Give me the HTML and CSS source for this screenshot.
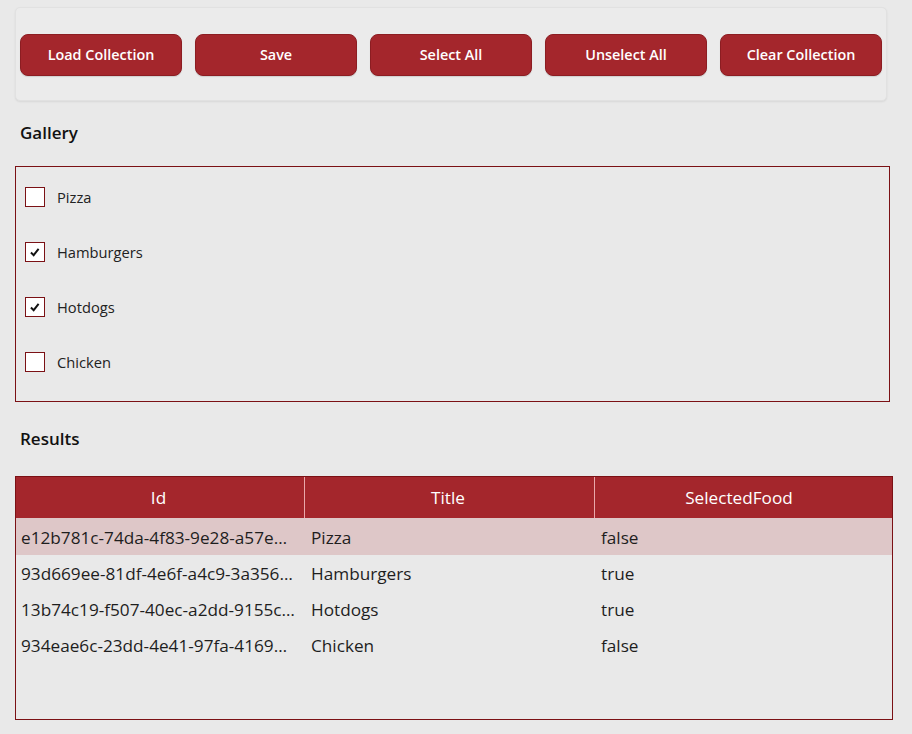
FILE: index.html
```html
<!DOCTYPE html>
<html>
<head>
<meta charset="utf-8">
<link rel="stylesheet" href="styles.css">
</head>
<body>
<div class="page">
  <div class="toolbar">
    <button class="btn">Load Collection</button>
    <button class="btn">Save</button>
    <button class="btn">Select All</button>
    <button class="btn">Unselect All</button>
    <button class="btn">Clear Collection</button>
  </div>

  <div class="label gallery-label">Gallery</div>
  <div class="gallery">
    <div class="item"><span class="box"></span><span class="item-text">Pizza</span></div>
    <div class="item"><span class="box checked"><svg viewBox="0 0 20 20" width="18" height="18"><path d="M5.5 10.5 L8.5 13.5 L14 6.5" fill="none" stroke="#111" stroke-width="2.2"/></svg></span><span class="item-text">Hamburgers</span></div>
    <div class="item"><span class="box checked"><svg viewBox="0 0 20 20" width="18" height="18"><path d="M5.5 10.5 L8.5 13.5 L14 6.5" fill="none" stroke="#111" stroke-width="2.2"/></svg></span><span class="item-text">Hotdogs</span></div>
    <div class="item"><span class="box"></span><span class="item-text">Chicken</span></div>
  </div>

  <div class="label results-label">Results</div>
  <div class="table">
    <div class="thead">
      <div class="th">Id</div>
      <div class="th">Title</div>
      <div class="th th-last">SelectedFood</div>
    </div>
    <div class="row selected">
      <div class="td">e12b781c-74da-4f83-9e28-a57e…</div>
      <div class="td td-mid">Pizza</div>
      <div class="td td-mid">false</div>
    </div>
    <div class="row">
      <div class="td">93d669ee-81df-4e6f-a4c9-3a356…</div>
      <div class="td td-mid">Hamburgers</div>
      <div class="td td-mid">true</div>
    </div>
    <div class="row">
      <div class="td">13b74c19-f507-40ec-a2dd-9155c…</div>
      <div class="td td-mid">Hotdogs</div>
      <div class="td td-mid">true</div>
    </div>
    <div class="row">
      <div class="td">934eae6c-23dd-4e41-97fa-4169…</div>
      <div class="td td-mid">Chicken</div>
      <div class="td td-mid">false</div>
    </div>
  </div>
</div>
</body>
</html>
```

FILE: styles.css
```css
html, body {
  margin: 0;
  padding: 0;
  background: #e9e9e9;
  font-family: "Open Sans", "Noto Sans", sans-serif;
  color: #1e1e1e;
}

.page {
  padding: 7px 20px 0 15px;
}

.toolbar {
  width: 872px;
  height: 94px;
  box-sizing: border-box;
  border: 1px solid #e1e1e1;
  border-radius: 5px;
  background: #ebebeb;
  box-shadow: 0 1px 2px rgba(0,0,0,0.08);
  display: flex;
  align-items: center;
  gap: 13px;
  padding: 1px 0 0 4px;
}

.btn {
  width: 162px;
  height: 42px;
  border: 1px solid #8c1d22;
  border-radius: 8px;
  background: #a4262c;
  color: #fff;
  font-family: "Open Sans", "Noto Sans", sans-serif;
  font-size: 14.4px;
  font-weight: 600;
  padding: 0;
  box-shadow: 0 1px 1px rgba(0,0,0,0.12);
}

.label {
  font-size: 17px;
  font-weight: 600;
  color: #111;
  padding-left: 5px;
  line-height: 22px;
}

.gallery-label {
  margin-top: 21px;
}

.gallery {
  margin-top: 22px;
  width: 875px;
  height: 236px;
  box-sizing: border-box;
  border: 1px solid #7b1115;
  padding-top: 20px;
  display: flex;
  flex-direction: column;
  gap: 35px;
}

.item {
  display: flex;
  align-items: center;
  height: 20px;
  padding-left: 9px;
}

.box {
  width: 20px;
  height: 20px;
  box-sizing: border-box;
  border: 1px solid #7b1115;
  background: #fff;
  display: flex;
  align-items: center;
  justify-content: center;
}

.item-text {
  margin-left: 12px;
  font-size: 14.7px;
  color: #222;
}

.results-label {
  margin-top: 26px;
}

.table {
  margin-top: 26px;
  width: 878px;
  height: 244px;
  box-sizing: border-box;
  border: 1px solid #7b1115;
}

.thead {
  display: grid;
  grid-template-columns: 289px 290px 1fr;
  height: 41px;
  background: #a4262c;
}

.th {
  color: #fff;
  font-size: 17.2px;
  display: flex;
  align-items: center;
  justify-content: center;
  border-right: 1px solid #e9a8ab;
  padding-right: 3px;
}

.th-last {
  border-right: none;
  padding-right: 9px;
}

.row {
  display: grid;
  grid-template-columns: 289px 290px 1fr;
  height: 36px;
}

.row.selected {
  background: #dec7c8;
  height: 37px;
}

.td {
  font-size: 17.2px;
  color: #1e1e1e;
  display: flex;
  align-items: center;
  padding-left: 5px;
  padding-top: 1px;
  white-space: nowrap;
  overflow: hidden;
}

.td-mid {
  padding-left: 6px;
}
```
